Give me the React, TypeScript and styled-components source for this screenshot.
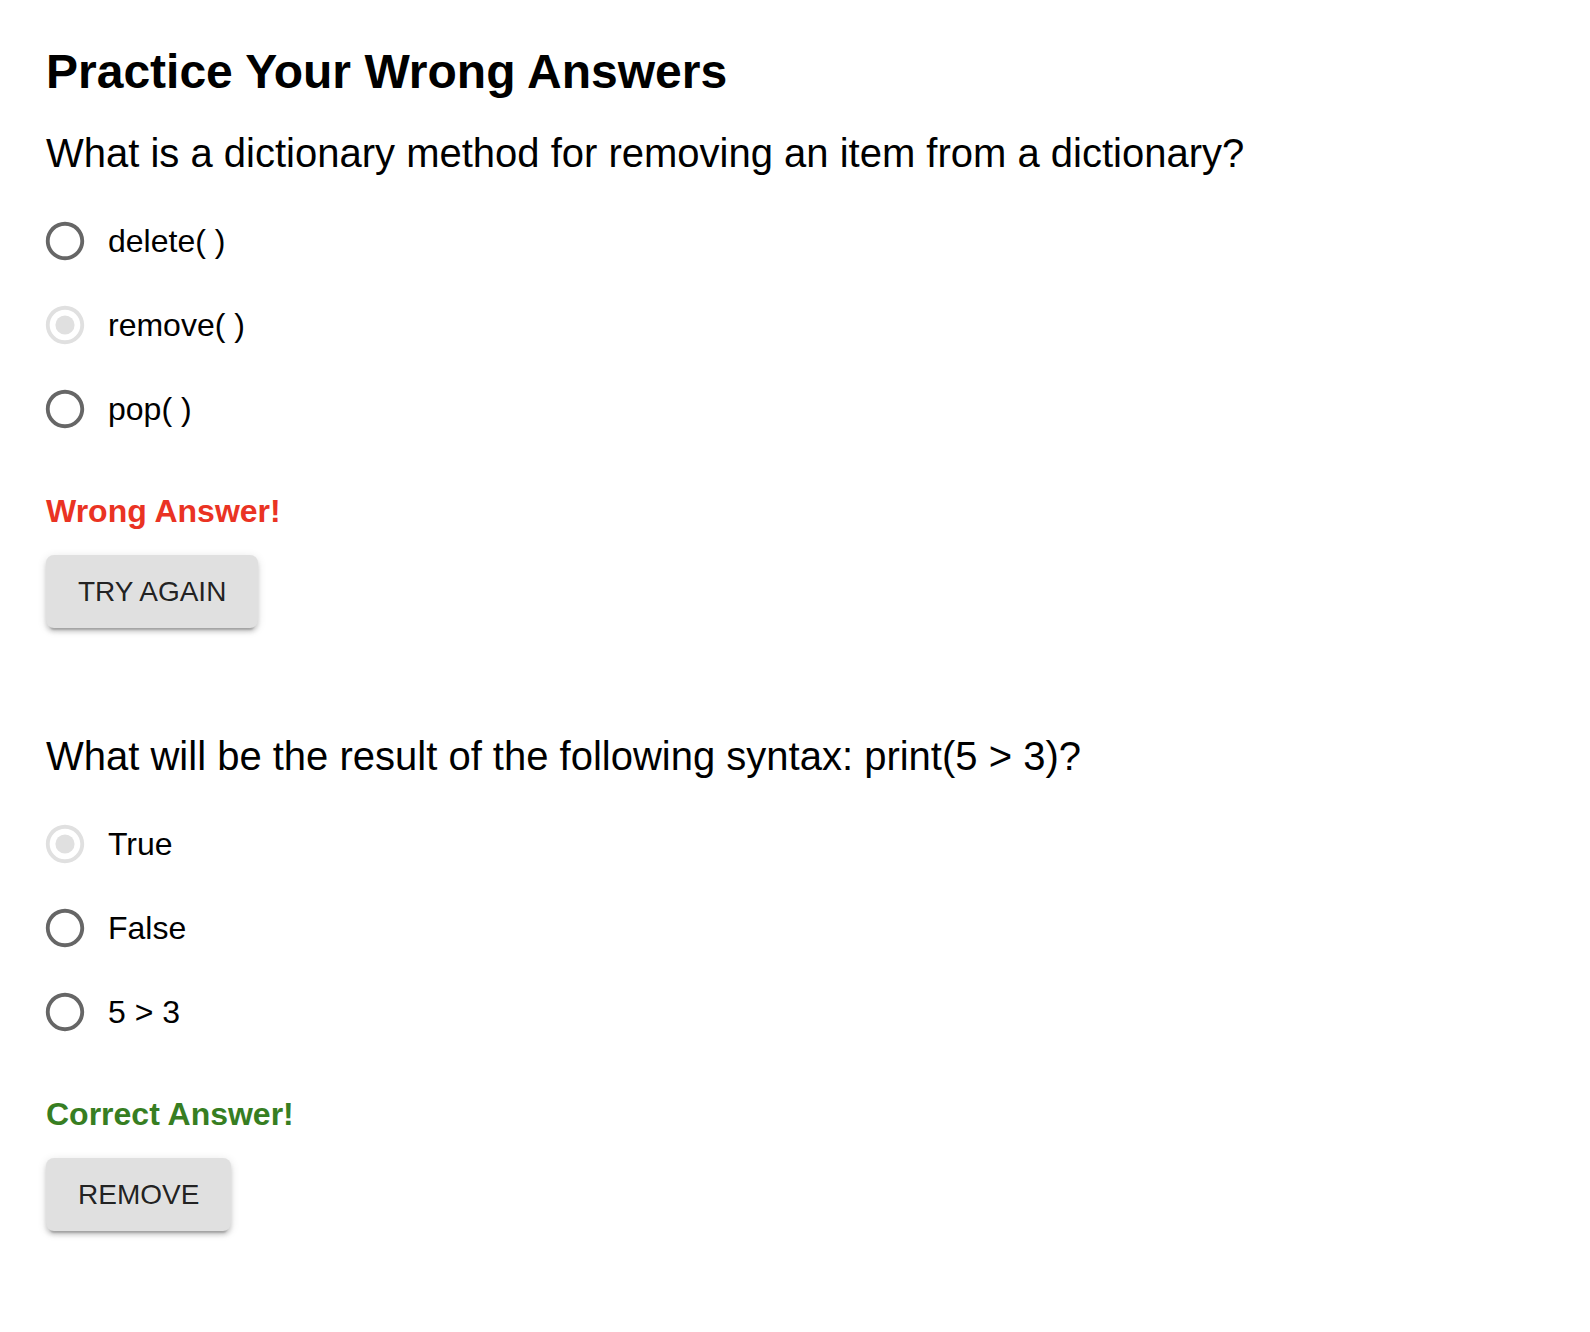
import React from "react";
import styled, { createGlobalStyle } from "styled-components";

const GlobalStyle = createGlobalStyle`
  html, body {
    margin: 0;
    padding: 0;
    background: #ffffff;
  }
  body {
    font-family: "Liberation Sans", Arial, Helvetica, sans-serif;
    color: #000000;
  }
`;

const Page = styled.main`
  display: flex;
  flex-direction: column;
  padding: 44px 46px 80px;
`;

const Title = styled.h1`
  margin: 0 0 29px;
  font-size: 48px;
  line-height: 56px;
  font-weight: 700;
  color: #000;
`;

const QuestionBlock = styled.section`
  display: flex;
  flex-direction: column;
  align-items: flex-start;
  & + & {
    margin-top: 104px;
  }
`;

const QuestionText = styled.p`
  margin: 0 0 22px;
  font-size: 40px;
  line-height: 48px;
  font-weight: 400;
  color: #000;
`;

const Options = styled.div`
  display: flex;
  flex-direction: column;
`;

const OptionRow = styled.label`
  display: flex;
  align-items: center;
  height: 84px;
  cursor: pointer;
`;

const RadioIcon = styled.span<{ $disabled?: boolean }>`
  display: inline-flex;
  width: 46px;
  height: 46px;
  margin-left: -4px;
  margin-right: 20px;
  color: ${(p) => (p.$disabled ? "#e0e0e0" : "#666666")};
  svg {
    width: 46px;
    height: 46px;
    fill: currentColor;
  }
`;

const OptionLabel = styled.span`
  font-size: 32px;
  line-height: 48px;
  color: #000;
`;

const Feedback = styled.p<{ $correct: boolean }>`
  margin: 40px 0 24px;
  font-size: 32px;
  line-height: 40px;
  font-weight: 700;
  color: ${(p) => (p.$correct ? "#377e22" : "#ea3323")};
`;

const ActionButton = styled.button`
  font-family: "Liberation Sans", Arial, Helvetica, sans-serif;
  font-size: 28px;
  line-height: 49px;
  font-weight: 400;
  text-transform: uppercase;
  color: rgba(0, 0, 0, 0.87);
  background: #e0e0e0;
  border: none;
  border-radius: 8px;
  padding: 12px 32px;
  cursor: pointer;
  box-shadow: 0px 6px 2px -4px rgba(0, 0, 0, 0.2),
    0px 4px 4px 0px rgba(0, 0, 0, 0.14),
    0px 2px 10px 0px rgba(0, 0, 0, 0.12);
`;

const Radio: React.FC<{ checked?: boolean; disabled?: boolean }> = ({ checked, disabled }) => (
  <RadioIcon $disabled={disabled}>
    <svg viewBox="0 0 24 24" aria-hidden="true">
      <path d="M12 2C6.48 2 2 6.48 2 12s4.48 10 10 10 10-4.48 10-10S17.52 2 12 2zm0 18c-4.42 0-8-3.58-8-8s3.58-8 8-8 8 3.58 8 8-3.58 8-8 8z" />
      {checked && <circle cx="12" cy="12" r="5" />}
    </svg>
  </RadioIcon>
);

type Question = {
  text: string;
  options: string[];
  selected: number;
  correct: boolean;
  action: string;
};

const questions: Question[] = [
  {
    text: "What is a dictionary method for removing an item from a dictionary?",
    options: ["delete( )", "remove( )", "pop( )"],
    selected: 1,
    correct: false,
    action: "Try again",
  },
  {
    text: "What will be the result of the following syntax: print(5 > 3)?",
    options: ["True", "False", "5 > 3"],
    selected: 0,
    correct: true,
    action: "Remove",
  },
];

export default function App() {
  return (
    <>
      <GlobalStyle />
      <Page>
        <Title>Practice Your Wrong Answers</Title>
        {questions.map((q, qi) => (
          <QuestionBlock key={qi}>
            <QuestionText>{q.text}</QuestionText>
            <Options>
              {q.options.map((o, oi) => (
                <OptionRow key={oi}>
                  <Radio checked={oi === q.selected} disabled={oi === q.selected} />
                  <OptionLabel>{o}</OptionLabel>
                </OptionRow>
              ))}
            </Options>
            <Feedback $correct={q.correct}>
              {q.correct ? "Correct Answer!" : "Wrong Answer!"}
            </Feedback>
            <ActionButton>{q.action}</ActionButton>
          </QuestionBlock>
        ))}
      </Page>
    </>
  );
}
